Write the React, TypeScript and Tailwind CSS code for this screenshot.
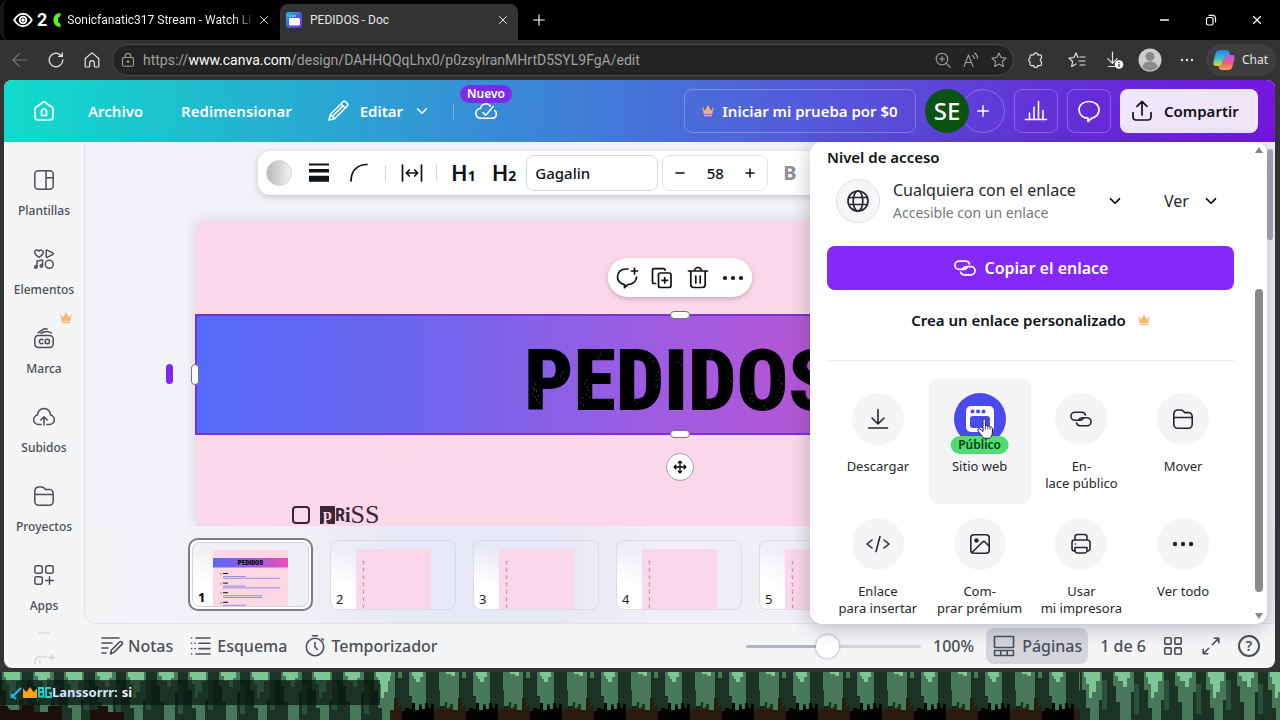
import React from "react";
import { X, Plus, Minus, ChevronDown } from "lucide-react";

type IconProps = { className?: string; children?: React.ReactNode; box?: number; w?: number };

function Icon({ className = "size-6", children, box = 24, w = 1.5 }: IconProps) {
  return (
    <svg
      viewBox={`0 0 ${box} ${box}`}
      className={`shrink-0 ${className}`}
      fill="none"
      stroke="currentColor"
      strokeWidth={w}
      strokeLinecap="round"
      strokeLinejoin="round"
      aria-hidden="true"
    >
      {children}
    </svg>
  );
}

function Crown() {
  return (
    <svg viewBox="0 0 12 12" className="size-3 shrink-0" aria-hidden="true">
      <path d="M.6 3.2 3 5.4 6 .8l3 4.6 2.4-2.2-1.1 6H1.7zM2 10h8v1.3H2z" fill="#f3b765" />
      <circle cx="6" cy="1" r=".8" fill="#f3b765" />
      <circle cx=".8" cy="3.2" r=".8" fill="#f3b765" />
      <circle cx="11.2" cy="3.2" r=".8" fill="#f3b765" />
    </svg>
  );
}

const LinkPaths = () => (
  <>
    <path d="M16.500 8c-.5-1.700-2-2.800-3.900-2.800H6a4 4 0 0 0 0 8.100H10.500c1.600 0 2.700-.7 3.600-1.700" />
    <path d="M7.500 16c.5 1.700 2 2.800 3.900 2.800H18a4 4 0 0 0 0-8.100H13.500c-1.600 0-2.700.7-3.600 1.700" />
  </>
);

const FolderPaths = () => (
  <path d="M2.800 10.500h18.400M2.800 17V6.800a3.800 3.800 0 0 1 3.800-3.800h3c1 0 1.900.4 2.600 1.100l1.300 1.500h4a3.800 3.800 0 0 1 3.700 3.800V17.500a3.800 3.800 0 0 1-3.800 3.700H6.600A3.800 3.800 0 0 1 2.800 17.500z" />
);

/* ---------- Browser chrome ---------- */

function TabBar() {
  return (
    <div className="flex h-10 shrink-0 items-end bg-black font-[Roboto,'Noto_Sans',sans-serif] text-white">
      <div className="flex h-10 w-[280px] items-center gap-1.5 rounded-lg border-l-4 border-[#161616] px-[9px]">
        <span className="flex items-center gap-1">
          <Icon className="size-5" w={2.2}>
            <path d="M1.500 12S5.500 4.500 12 4.500 22.500 12 22.500 12 18.500 19.500 12 19.500 1.500 12 1.500 12z" />
            <circle cx="12" cy="12" r="4" />
            <circle cx="12" cy="12" r="1" fill="currentColor" />
          </Icon>
          <span className="text-lg font-bold leading-5">2</span>
        </span>
        <svg viewBox="0 0 8 14" className="h-3.5 w-2 shrink-0" aria-hidden="true">
          <path d="M7.500 0C3 0 .5 3 .5 7s2.500 7 7 7V11L5 9V5l2.500-2z" fill="#53fc18" />
        </svg>
        <button className="min-w-0 flex-1 whitespace-nowrap bg-gradient-to-r from-white from-90% to-neutral-700 bg-clip-text text-left text-xs text-transparent">
          Sonicfanatic317 Stream - Watch Li
        </button>
        <button aria-label="Cerrar pestaña">
          <X className="size-3.5" strokeWidth={1.5} />
        </button>
      </div>
      <div className="flex h-9 w-[238px] items-center gap-2 rounded-t-lg bg-[#333333] pb-1 pl-[6px] pr-2">
        <svg viewBox="0 0 16 16" className="size-4 shrink-0" aria-hidden="true">
          <defs>
            <linearGradient id="fav" x1="0" y1="0" x2="1" y2="1">
              <stop offset="0" stopColor="#17c9cf" />
              <stop offset=".55" stopColor="#4b55e0" />
              <stop offset="1" stopColor="#8421e8" />
            </linearGradient>
          </defs>
          <rect width="16" height="16" rx="3" fill="url(#fav)" />
          <rect x="3" y="6" width="11" height="7.500" rx="1.500" fill="#fff" />
          <path d="M3.500 4h1.500M6 4h1.500M8.500 4H10" stroke="#fff" />
        </svg>
        <button className="flex-1 text-left text-xs text-neutral-200">PEDIDOS - Doc</button>
        <button aria-label="Cerrar pestaña activa">
          <X className="size-3.5" strokeWidth={1.5} />
        </button>
      </div>
      <div className="flex h-10 flex-1 items-center justify-between pl-3 pr-4">
        <button aria-label="Nueva pestaña">
          <Plus className="size-[18px]" strokeWidth={1.5} />
        </button>
        <div className="flex items-center gap-8">
          <button aria-label="Minimizar">
            <Icon className="size-3.5" box={14} w={1.3}>
              <path d="M2.500 7h8" />
            </Icon>
          </button>
          <button aria-label="Restaurar">
            <Icon className="size-3.5" box={14} w={1.2}>
              <rect x="2.500" y="4.500" width="6.500" height="7.500" rx="1.500" />
              <path d="M5 2.300h3.500a3 3 0 0 1 3 3V9" />
            </Icon>
          </button>
          <button aria-label="Cerrar">
            <X className="size-3.5" strokeWidth={2} />
          </button>
        </div>
      </div>
    </div>
  );
}

function AddressBar() {
  return (
    <div className="flex h-10 shrink-0 items-center bg-[#333333] pl-3 pr-1 text-neutral-200">
      <div className="flex w-[100px] items-center gap-5">
        <button aria-label="Atrás" className="text-neutral-500">
          <Icon className="size-4" box={16} w={1.1}>
            <path d="M15 8H1M7.500 1.500 1 8l6.500 6.500" />
          </Icon>
        </button>
        <button aria-label="Actualizar">
          <Icon className="size-4" box={16} w={1.3}>
            <path d="M14.800 8A6.800 6.800 0 1 1 12.500 2.900L14 4.300M14.300.8v3.600h-3.600" />
          </Icon>
        </button>
        <button aria-label="Inicio">
          <Icon className="size-4" box={16} w={1.2}>
            <path d="M8 .9 1.200 6.500V14a1 1 0 0 0 1 1h2.500a1 1 0 0 0 1-1v-3a2.300 2.300 0 0 1 4.600 0v3a1 1 0 0 0 1 1h2.500a1 1 0 0 0 1-1V6.500z" />
          </Icon>
        </button>
      </div>
      <div className="flex h-8 min-w-0 flex-1 items-center gap-3 rounded-full border border-[#484848] bg-[#242424] pl-2 pr-1.5 text-neutral-400">
        <Icon className="size-3.5" box={14} w={1.1}>
          <rect x="1.500" y="4.500" width="11" height="8.700" rx="1.500" />
          <path d="M4.200 4.500V3.300a2.800 2.800 0 0 1 5.600 0v1.200" />
          <circle cx="7" cy="8.800" r=".7" fill="currentColor" />
        </Icon>
        <div
          role="textbox"
          tabIndex={0}
          aria-label="Barra de direcciones"
          className="-ml-2 min-w-0 flex-1 truncate pl-1 font-[Roboto,'Noto_Sans',sans-serif] text-sm"
        >
          https://<span className="text-white">www.canva.com</span>
          /design/DAHHQQqLhx0/p0zsylranMHrtD5SYL9FgA/edit
        </div>
        <button aria-label="Acercar">
          <Icon className="size-4" box={16} w={1.1}>
            <circle cx="7" cy="7" r="5.800" />
            <path d="m11.300 11.300 4 4M4.500 7h5M7 4.500v5" />
          </Icon>
        </button>
        <button aria-label="Leer en voz alta">
          <Icon className="size-4" box={16} w={1.1}>
            <path d="M1 14.500 5.500 3 10 14.500M2.600 10.500h5.800M9.500 3.500c1 .6 1.700 1.700 1.700 3M11.500 1c1.800 1 3 3 3 5.300" />
          </Icon>
        </button>
        <button aria-label="Favorito">
          <Icon className="size-4" box={16} w={1.1}>
            <path d="m8 1 2.100 4.500 4.900.6-3.600 3.400.9 4.900L8 12l-4.300 2.400.9-4.900L1 6.100l4.900-.6z" />
          </Icon>
        </button>
      </div>
      <div className="flex items-center gap-5 pl-3.5 pr-3">
        <button aria-label="Extensiones">
          <Icon className="size-4" box={16} w={1.2}>
            <path d="M3.500 2.800h2.300a1.900 1.900 0 0 1 3.800 0H12a1.500 1.500 0 0 1 1.500 1.500v2a1.900 1.900 0 0 0 0 3.600v2.300a1.500 1.500 0 0 1-1.500 1.500H9.600a1.900 1.900 0 0 1-3.800 0H3.500A1.500 1.500 0 0 1 2 12.200V9.900a1.900 1.900 0 0 1 0-3.600v-2a1.500 1.500 0 0 1 1.500-1.500z" />
          </Icon>
        </button>
        <button aria-label="Lista de favoritos" className="pl-1">
          <Icon className="size-[18px]" box={18} w={1.2}>
            <path d="M10 6.500 8 2 5.900 6.500 1 7.100l3.600 3.400-.9 4.900L8 13M12 6h5M11 10h6M12 14h5" />
          </Icon>
        </button>
        <button aria-label="Descargas">
          <Icon className="size-[18px]" box={18} w={1.2}>
            <path d="M6.500 1v11M1.800 7.600 6.500 12.300l4.700-4.700M2.500 15.500h6" />
            <circle cx="13" cy="13.500" r="4.300" fill="#fff" stroke="none" />
            <path d="M13 13v2.500M13 11.300v.1" stroke="#222" />
          </Icon>
        </button>
        <button aria-label="Perfil" className="-mx-1.5">
          <svg viewBox="0 0 24 24" className="size-6" aria-hidden="true">
            <circle cx="12" cy="12" r="11.500" fill="#cfcdcb" />
            <circle cx="12" cy="8.500" r="4.500" fill="#8d8a88" />
            <path d="M4.500 19.500c0-8 15-8 15 0-4 4-11 4-15 0z" fill="#8d8a88" />
          </svg>
        </button>
        <button aria-label="Más opciones" className="pl-1">
          <Icon className="h-4 w-3.5" box={14}>
            <g fill="currentColor" stroke="none">
              <circle cx="2" cy="7" r="1.200" />
              <circle cx="7" cy="7" r="1.200" />
              <circle cx="12" cy="7" r="1.200" />
            </g>
          </Icon>
        </button>
      </div>
      <button className="flex h-8 items-center gap-1.5 rounded-full bg-[#3e3e3e] px-1.5 pr-2 text-xs">
        <svg viewBox="0 0 24 24" className="size-6" aria-hidden="true">
          <defs>
            <linearGradient id="cpa" x1="0" y1="0" x2="0" y2="1">
              <stop offset="0" stopColor="#2a7bf0" />
              <stop offset=".5" stopColor="#2cc5d6" />
              <stop offset="1" stopColor="#e9d435" />
            </linearGradient>
            <linearGradient id="cpb" x1="0" y1="0" x2="0" y2="1">
              <stop offset="0" stopColor="#b05cf5" />
              <stop offset=".5" stopColor="#f1568f" />
              <stop offset="1" stopColor="#f9a14a" />
            </linearGradient>
          </defs>
          <path d="M8 2h7c1.500 0 2 1 2.300 2l.7 3h-3c-1.500 0-2.200 1-2.600 2.300L10.500 15c-.5 2-1.500 3-3 3H4c-2 0-3-1.500-2.500-4l2-8.500C4.200 3 5.500 2 8 2z" fill="url(#cpa)" />
          <path d="M16 22H9.500c-1.500 0-2.300-1-2.600-2.500L6.500 18h1c1.500 0 2.500-1 3-3l1.900-5.700C12.800 8 13.500 7 15 7h5c2 0 3 1.500 2.500 4l-2 7.500C19.800 21 18.500 22 16 22z" fill="url(#cpb)" />
        </svg>
        Chat
      </button>
    </div>
  );
}

/* ---------- Editor header ---------- */

function EditorHeader() {
  return (
    <header className="flex h-[62px] shrink-0 items-center justify-between bg-[linear-gradient(95deg,#10dccb_0%,#2aa6d2_26%,#3f7ed8_45%,#5656da_65%,#642fd8_83%,#7415e0_100%)] pl-7 pr-[17px] text-[15px] font-semibold text-white">
      <div className="flex items-center">
        <a href="#inicio" aria-label="Inicio">
          <Icon w={1.7}>
            <path d="M12 2.500 4 8.300A2.500 2.500 0 0 0 3 10.300V18a3 3 0 0 0 3 3h12a3 3 0 0 0 3-3v-7.700a2.500 2.500 0 0 0-1-2z" />
            <path d="M9.500 16.500v-4a2.500 2.500 0 0 1 5 0v4z" />
          </Icon>
        </a>
        <button className="ml-8">Archivo</button>
        <button className="ml-[38px]">Redimensionar</button>
        <button className="ml-[34px] flex items-center gap-2.5">
          <Icon w={1.5}>
            <path d="m3 21 1.300-5.500L16.800 3a2.200 2.200 0 0 1 3.100 0l1.200 1.200a2.200 2.200 0 0 1 0 3.100L8.500 19.700zM15 4.900 19.200 9M4.300 15.500l4.200 4.200M6.800 17 17 6.900" />
          </Icon>
          Editar
          <ChevronDown className="size-[18px]" strokeWidth={2} />
        </button>
        <span className="ml-[22px] h-4 w-px bg-white/30" />
        <div className="relative ml-5 flex">
          <button aria-label="Guardado en la nube">
            <Icon w={1.6}>
              <path d="M16.500 7.200A5.500 5.500 0 0 0 6.500 9.500 4.900 4.900 0 0 0 7 19.300h11a4.300 4.300 0 0 0 2.800-7.600M9 13.500l2.700 2.700 7.500-8.500" />
            </Icon>
          </button>
          <span className="absolute -top-[14px] left-1/2 -translate-x-1/2 rounded-full bg-[#7d2ae8] px-[7px] text-xs leading-[18px]">
            Nuevo
          </span>
        </div>
      </div>
      <div className="flex items-center">
        <button className="flex h-11 w-[232px] items-center justify-center gap-2 rounded-lg border border-white/25">
          <Crown />
          Iniciar mi prueba por $0
        </button>
        <span className="z-10 ml-[9px] flex size-11 items-center justify-center rounded-full bg-[#0b5312] text-2xl font-medium">
          SE
        </span>
        <button
          aria-label="Añadir personas"
          className="-ml-2 flex size-11 items-center justify-center rounded-full border border-white/25"
        >
          <Plus className="size-[18px]" strokeWidth={2} />
        </button>
        <button
          aria-label="Estadísticas"
          className="ml-[9px] flex size-11 items-center justify-center rounded-lg border border-white/25"
        >
          <Icon w={1.6}>
            <path d="M1.500 20.500h21M5.500 20.500V14M10 20.500V8M14.500 20.500V2.500M19 20.500v-9" />
          </Icon>
        </button>
        <button
          aria-label="Comentarios"
          className="ml-[9px] flex size-11 items-center justify-center rounded-lg border border-white/25"
        >
          <Icon w={1.7}>
            <path d="M14.500 19.300 11 22.500V19.200C6 19 2 15.800 2 10.800 2 6 6 2.500 12 2.500s10 3.500 10 8.300c0 4.300-3 7.400-7.500 8.500z" />
          </Icon>
        </button>
        <button className="ml-[9px] flex h-11 w-[138px] items-center gap-2.5 rounded-lg bg-[#efe6fb] pl-2.5 text-[#0d1216]">
          <Icon w={1.7}>
            <path d="M3 13.500v4.800a2.700 2.700 0 0 0 2.700 2.700h12.600a2.700 2.700 0 0 0 2.700-2.700v-4.800M12 16V2.500M7 7.300l5-5 5 5" />
          </Icon>
          Compartir
        </button>
      </div>
    </header>
  );
}

/* ---------- Sidebar ---------- */

const sideItems: { label: string; crown?: boolean; icon: React.ReactNode }[] = [
  {
    label: "Plantillas",
    icon: (
      <>
        <rect x="2.800" y="2.800" width="18.400" height="18.400" rx="3.500" />
        <path d="M14 2.800v18.400M14 9.800h7.200" />
      </>
    ),
  },
  {
    label: "Elementos",
    icon: (
      <>
        <path d="M7 10.300C4.500 8.800 2.600 7.200 2.600 5.300A2.300 2.300 0 0 1 7 4.300a2.300 2.300 0 0 1 4.300 1c0 1.900-1.800 3.500-4.300 5zM14.200 3.600v6.200c0 .5.500.8 1 .5l5.800-3a.7.700 0 0 0 0-1.200l-5.800-3c-.5-.3-1 0-1 .5zM5 20v-6l5.500-1v6" />
        <circle cx="3.800" cy="20" r="1.200" />
        <circle cx="9.300" cy="19" r="1.200" />
        <circle cx="17.300" cy="17.300" r="4" />
      </>
    ),
  },
  {
    label: "Marca",
    crown: true,
    icon: (
      <>
        <rect x="2.800" y="9.500" width="18.400" height="12" rx="3.500" />
        <path d="M11 13.800a2.200 2.200 0 1 0 0 3.400M6 6.800 12 3c1-.6 2-.5 3 .2M9 7.300l3-1.300c3-1 5.500-.5 7.500 1" />
        <circle cx="15.300" cy="15.500" r="2.200" />
      </>
    ),
  },
  {
    label: "Subidos",
    icon: (
      <path d="M9 19.500H6.500a4.800 4.800 0 0 1-1-9.500 6.500 6.500 0 0 1 13 0 4.800 4.800 0 0 1-1 9.500H15M12 20v-7.500M8.800 15 12 11.800 15.200 15" />
    ),
  },
  { label: "Proyectos", icon: <FolderPaths /> },
  {
    label: "Apps",
    icon: (
      <>
        <rect x="2.800" y="2.800" width="7.500" height="7.500" rx="2" />
        <rect x="13.700" y="2.800" width="7.500" height="7.500" rx="2" />
        <rect x="2.800" y="13.700" width="7.500" height="7.500" rx="2" />
        <path d="M17.500 13.700v7.600M13.700 17.500h7.600" />
      </>
    ),
  },
];

function Sidebar() {
  return (
    <nav
      aria-label="Herramientas"
      className="flex w-20 shrink-0 flex-col overflow-hidden text-xs font-medium text-[#4c4f53]"
    >
      {sideItems.map((it) => (
        <button key={it.label} className="relative flex h-[79px] shrink-0 flex-col items-center gap-[11px] pt-[26px]">
          {it.crown && (
            <span className="absolute right-3 top-3">
              <Crown />
            </span>
          )}
          <Icon>{it.icon}</Icon>
          <span className="leading-4">{it.label}</span>
        </button>
      ))}
      <button aria-label="Más herramientas" className="flex flex-col items-center gap-5 pt-4 text-[#d3d5d8]">
        <span className="h-0.5 w-3 rounded bg-[#e0e2e5]" />
        <Icon>
          <path d="M3 10V7a4 4 0 0 1 4-4h8M19.500 1v5M17 3.500h5M8 7v2" />
        </Icon>
      </button>
    </nav>
  );
}

/* ---------- Canvas ---------- */

function TextToolbar() {
  return (
    <div className="absolute left-[173px] top-[9px] flex h-11 w-[1000px] items-center rounded-xl bg-white text-[#0d1216] shadow-[0_2px_6px_rgba(60,60,90,0.25)]">
      <button
        aria-label="Color"
        className="ml-2 size-[26px] rounded-full border border-neutral-300 bg-gradient-to-r from-[#b9b9b9] to-[#f2f2f2]"
      />
      <button aria-label="Grosor" className="ml-[15px]">
        <Icon>
          <path d="M2 3.500h20" strokeWidth="1.800" strokeLinecap="butt" />
          <path d="M2 9.800h20" strokeWidth="3.500" strokeLinecap="butt" />
          <path d="M2 17.800h20" strokeWidth="6" strokeLinecap="butt" />
        </Icon>
      </button>
      <button aria-label="Curva" className="ml-4">
        <Icon w={1.7}>
          <path d="M4 20C4 10 10 3.500 20 3.500" />
        </Icon>
      </button>
      <span className="ml-3.5 h-4 w-px bg-neutral-300" />
      <button aria-label="Espaciado" className="ml-3.5">
        <Icon w={1.7}>
          <path d="M2.500 4v16M21.500 4v16M6.500 12h11M9.300 9l-3 3 3 3M14.700 9l3 3-3 3" />
        </Icon>
      </button>
      <span className="ml-3 h-4 w-px bg-neutral-300" />
      <button className="ml-3.5 flex items-baseline text-[22px] font-semibold leading-none">
        H<span className="text-sm font-bold">1</span>
      </button>
      <button className="ml-4 flex items-baseline text-[22px] font-semibold leading-none">
        H<span className="text-sm font-bold">2</span>
      </button>
      <input
        aria-label="Fuente"
        defaultValue="Gagalin"
        className="ml-2.5 h-9 w-[132px] rounded-lg border border-[#d5d6da] px-2 text-[15px] font-medium outline-none"
      />
      <div className="ml-1 flex h-9 w-[106px] items-center justify-between rounded-lg border border-[#e2e3e6] px-2.5">
        <button aria-label="Reducir">
          <Minus className="size-3.5" strokeWidth={2.5} />
        </button>
        <input
          aria-label="Tamaño de fuente"
          defaultValue="58"
          className="w-8 text-center text-[15px] font-medium outline-none"
        />
        <button aria-label="Aumentar">
          <Plus className="size-3.5" strokeWidth={2.5} />
        </button>
      </div>
      <button className="ml-[15px] text-xl font-bold text-[#8e9094]">B</button>
    </div>
  );
}

const specks = [
  [8, 44], [12, 50], [9, 38], [36, 26], [62, 44], [60, 34], [56, 52], [74, 8], [84, 50],
  [110, 50], [132, 26], [130, 34], [126, 8], [154, 12], [160, 50], [182, 52],
  [204, 28], [208, 33], [186, 8], [226, 48], [252, 46], [256, 38], [254, 30], [240, 56],
];

function Design() {
  return (
    <div className="absolute left-1/2 top-[79px] h-[306px] w-[968px] -translate-x-1/2 rounded-t-md bg-[#fad8e8] shadow-[0_0_14px_rgba(70,80,110,0.18)]">
      <div className="absolute left-[412px] top-[37px] flex h-[39px] w-[144px] items-center justify-between rounded-full bg-white px-[7px] text-[#0d1216] shadow-[0_2px_5px_rgba(60,40,60,0.25)]">
        <button aria-label="Comentar">
          <Icon w={1.7}>
            <path d="M13 3H11C6 3 2.500 6.300 2.500 10.800c0 4.400 3 7 7 7.800v3l3.200-3c5-.3 8.800-3.200 8.800-7.600M19.500 2v6M16.500 5h6" />
          </Icon>
        </button>
        <button aria-label="Duplicar">
          <Icon w={1.7}>
            <rect x="8.500" y="7" width="12.500" height="14.500" rx="2" />
            <path d="M5.500 17.500H4.300A1.800 1.800 0 0 1 2.500 15.700V4.500c0-1 .8-1.800 1.800-1.800h9c1 0 1.800.8 1.800 1.500M14.700 11.500v5.500M12 14.300h5.500" />
          </Icon>
        </button>
        <button aria-label="Eliminar">
          <Icon w={1.7}>
            <path d="M2.500 5h19M8.500 5a3.500 3.500 0 0 1 7 0M4.800 5v13.500a3 3 0 0 0 3 3h8.400a3 3 0 0 0 3-3V5M9.800 10v7M14.200 10v7" />
          </Icon>
        </button>
        <button aria-label="Más">
          <Icon>
            <g fill="currentColor" stroke="none">
              <circle cx="4" cy="12" r="2.100" />
              <circle cx="12" cy="12" r="2.100" />
              <circle cx="20" cy="12" r="2.100" />
            </g>
          </Icon>
        </button>
      </div>
      <div className="absolute -left-px top-[93px] flex h-[121px] w-[970px] items-center justify-center border-2 border-[#7a30d8] bg-[linear-gradient(90deg,#566bfa_0%,#6a66ee_20%,#9a5de4_45%,#b356d6_62%,#ee4fb8_100%)] pt-3">
        <h1 className="relative font-['Roboto_Condensed',Roboto,sans-serif] text-[86px] font-black leading-none text-black">
          PEDIDOS
          <svg viewBox="0 0 312 62" className="absolute left-0 top-3 h-[62px] w-full" aria-hidden="true">
            {specks.map(([x, y], i) => (
              <path
                key={i}
                d={`M${x} ${y}h1M${x + 3} ${y + 3}h1M${x + 2} ${y - 4}h1`}
                stroke="#7a50c8"
                strokeWidth="1"
              />
            ))}
          </svg>
        </h1>
        <span className="absolute -left-[6px] top-[48px] h-[21px] w-2 rounded-full border border-neutral-500 bg-white" />
        <span className="absolute -left-[31px] top-[48px] h-5 w-[7px] rounded-full bg-[#8027f2]" />
        <span className="absolute -top-[5px] left-1/2 h-2 w-5 -translate-x-1/2 rounded-full border border-neutral-500 bg-white" />
        <span className="absolute -bottom-[5px] left-1/2 h-2 w-5 -translate-x-1/2 rounded-full border border-neutral-500 bg-white" />
      </div>
      <button
        aria-label="Mover elemento"
        className="absolute left-[470px] top-[232px] flex size-7 items-center justify-center rounded-full border border-neutral-400 bg-white text-black"
      >
        <Icon className="size-3.5" box={16} w={1.5}>
          <path d="M8 1.500v13M1.500 8h13M6 3.300 8 1.300l2 2M6 12.700l2 2 2-2M3.300 6l-2 2 2 2M12.700 6l2 2-2 2" />
        </Icon>
      </button>
      <label className="absolute left-[96px] top-[282px] flex items-center gap-2.5 text-[#3a2733]">
        <input type="checkbox" className="size-[18px] appearance-none rounded border-2 border-[#3a2733]" />
        <span className="flex items-center leading-6">
          <span className="bg-[#3a2733] px-[3px] font-['Liberation_Serif',serif] text-base font-bold leading-[18px] text-[#fad8e8]">
            p
          </span>
          <span className="font-['Roboto_Condensed',Roboto,sans-serif] text-lg font-bold leading-6">R</span>
          <span className="font-['Liberation_Serif',serif] text-xl font-bold leading-6">i</span>
          <span className="font-['Liberation_Serif',serif] text-[26px] leading-6">SS</span>
        </span>
      </label>
    </div>
  );
}

const blocks = [
  { name: "priss", a: 23, b: 57 },
  { name: "emilia", a: 23, b: 57 },
  { name: "abril", a: 39, b: 39 },
  { name: "cielo", a: 23, b: 57 },
];

function MiniFirst() {
  return (
    <svg viewBox="0 0 75 58" className="h-[58px] w-[75px]" role="img" aria-label="Miniatura">
      <defs>
        <linearGradient id="mini">
          <stop offset="0" stopColor="#566bfa" />
          <stop offset=".55" stopColor="#9c5ae0" />
          <stop offset="1" stopColor="#f04fb6" />
        </linearGradient>
      </defs>
      <rect width="75" height="58" fill="#fdd7e6" />
      <rect y="8" width="75" height="9.500" fill="url(#mini)" />
      <text
        x="37.500"
        y="15.200"
        fontSize="7"
        fontWeight="900"
        textAnchor="middle"
        fontFamily="Roboto Condensed, Roboto, sans-serif"
      >
        PEDIDOS
      </text>
      {blocks.map((b, i) => (
        <g key={b.name} transform={`translate(8 ${23 + i * 9.6})`}>
          <path d="M0 0v2" stroke="#333" strokeWidth=".5" />
          <path d="M2 .5h5" stroke="#111" strokeWidth="1" />
          <path d={`M2 3.500h${b.a}M2 5.300h${b.b}`} stroke="#6672d8" strokeWidth=".7" />
        </g>
      ))}
    </svg>
  );
}

function MiniEmpty() {
  return (
    <svg viewBox="0 0 75 61" className="h-[61px] w-[75px]" aria-hidden="true">
      <rect width="75" height="61" fill="#fad8e8" />
      {Array.from({ length: 7 }, (_, i) => (
        <path
          key={i}
          d={`M6.500 ${12.5 + i * 7.3}h2M7.500 ${13.5 + i * 7.3}v2`}
          stroke="#95808b"
          strokeWidth=".8"
        />
      ))}
    </svg>
  );
}

function PageStrip() {
  return (
    <div className="relative flex h-[97px] shrink-0 gap-4 overflow-hidden bg-[linear-gradient(90deg,#f3f4f6_0%,#f0f0f6_18%,#e8e9f6_26%,#e8e9f6_40%,#f1eef4_48%,#f1eef4_100%)] pl-[103px] pt-3">
      <button
        aria-current="page"
        aria-label="Página 1"
        className="mr-px flex h-[73px] w-[125px] shrink-0 rounded-[10px] border-2 border-[#7b7c82] bg-white p-0.5"
      >
        <span className="relative flex h-full w-full justify-center overflow-hidden rounded-lg border border-neutral-300 bg-[#f0eff3] bg-[radial-gradient(circle_at_0%_100%,#fff_20%,transparent_45%)] pt-[7px]">
          <MiniFirst />
          <span className="absolute bottom-0 left-[5px] text-[13px] font-bold leading-[18px] text-black">1</span>
        </span>
      </button>
      {[2, 3, 4, 5].map((n) => (
        <button
          key={n}
          aria-label={`Página ${n}`}
          className="relative mr-px mt-0.5 flex h-[70px] w-[126px] shrink-0 justify-center overflow-hidden rounded-lg border border-[#dcdbe3] bg-[radial-gradient(circle_at_0%_100%,#fff_20%,transparent_45%)] pt-2"
        >
          <MiniEmpty />
          <span className="absolute bottom-0 left-[5px] text-[13px] leading-5 text-[#222]">{n}</span>
        </button>
      ))}
    </div>
  );
}

function BottomBar() {
  return (
    <footer className="flex h-11 shrink-0 items-center justify-between pl-4 pr-[15px] text-base font-medium text-[#4c4f53]">
      <div className="flex items-center gap-4">
        <button className="flex items-center gap-1">
          <Icon w={1.6}>
            <path d="M2 4h17M2 9h10M2 14h6M2 19h4M10.500 20l1-4 8-8a1.700 1.700 0 0 1 2.400 2.400l-8 8z" />
          </Icon>
          Notas
        </button>
        <button className="flex items-center gap-1">
          <Icon w={1.6}>
            <path d="M7 4h14M10 9.300h11M10 14.600h11M7 20h14M2.500 4h.1M2.500 9.300h.1M6 9.300h.1M2.500 14.600h.1M6 14.600h.1M2.500 20h.1" />
          </Icon>
          Esquema
        </button>
        <button className="flex items-center gap-1">
          <Icon w={1.6}>
            <circle cx="12" cy="13" r="8.700" />
            <path d="M9.500 1.800h5M12 8.500V13l2.500 2.500M19 4.500l1.500 1.500" />
          </Icon>
          Temporizador
        </button>
      </div>
      <div className="flex items-center gap-3">
        <input
          type="range"
          aria-label="Zoom"
          defaultValue={46}
          className="h-[3px] w-[175px] appearance-none rounded-full bg-[linear-gradient(90deg,#b4b5c4_47%,#d3d4dd_47%)] [&::-webkit-slider-thumb]:size-[23px] [&::-webkit-slider-thumb]:appearance-none [&::-webkit-slider-thumb]:rounded-full [&::-webkit-slider-thumb]:bg-white [&::-webkit-slider-thumb]:shadow-[0_0_3px_rgba(50,50,80,0.5)]"
        />
        <button>100%</button>
        <button className="flex h-9 items-center gap-1.5 rounded-lg bg-[#d4d5df] px-1.5">
          <Icon w={1.6}>
            <path d="M2.500 2.500h19v11h-19zM2.500 16.500h19v5h-19zM8.800 16.500v5M15.200 16.500v5" />
          </Icon>
          Páginas
        </button>
        <button>1 de 6</button>
        <button aria-label="Cuadrícula" className="pl-1">
          <Icon className="size-[22px]" w={1.8}>
            <rect x="3" y="3" width="7" height="7" rx="1" />
            <rect x="14" y="3" width="7" height="7" rx="1" />
            <rect x="3" y="14" width="7" height="7" rx="1" />
            <rect x="14" y="14" width="7" height="7" rx="1" />
          </Icon>
        </button>
        <button aria-label="Pantalla completa" className="px-1">
          <Icon className="size-[22px]" w={1.7}>
            <path d="M13.500 10.500 20.500 3.500M15.500 3.500h5v5M9.500 14.500l-6 6M3.500 15.500v5h5" />
          </Icon>
        </button>
        <button
          aria-label="Ayuda"
          className="flex size-[22px] items-center justify-center rounded-full border-2 border-[#4c4f53] text-sm font-semibold leading-none"
        >
          ?
        </button>
      </div>
    </footer>
  );
}

/* ---------- Share panel ---------- */

function Action({ label, children }: { label: React.ReactNode; children: React.ReactNode }) {
  return (
    <button className="flex h-[125px] flex-col items-center gap-[13px] whitespace-nowrap pt-3.5">
      <span className="flex size-[52px] shrink-0 items-center justify-center rounded-full bg-[#f5f5f7]">
        <Icon w={1.6}>{children}</Icon>
      </span>
      <span className="text-center leading-[17px]">{label}</span>
    </button>
  );
}

function SharePanel() {
  return (
    <section
      aria-label="Compartir diseño"
      className="absolute right-2 top-0 flex h-[482px] w-[457px] overflow-hidden rounded-xl bg-white text-[#24272c] shadow-[0_3px_20px_rgba(40,40,80,0.3)]"
    >
      <div className="flex min-w-0 flex-1 flex-col pl-[17px] pr-[21px]">
        <h2 className="shrink-0 pt-1 text-[15px] font-semibold leading-[22px] text-[#0d1216]">Nivel de acceso</h2>
        <div className="mt-2.5 flex shrink-0 items-center pl-[9px]">
          <button className="flex flex-1 items-center text-left">
            <span className="flex size-11 items-center justify-center rounded-full border border-[#dcdde2] bg-[#f6f6f8]">
              <Icon w={1.7}>
                <circle cx="12" cy="12" r="10" />
                <ellipse cx="12" cy="12" rx="4.800" ry="10" />
                <path d="M3.500 8.500h17M3.500 15.500h17" />
              </Icon>
            </span>
            <span className="ml-[13px] flex flex-1 flex-col">
              <span className="text-base leading-6">Cualquiera con el enlace</span>
              <span className="text-sm leading-[22px] text-[#74777c]">Accesible con un enlace</span>
            </span>
            <ChevronDown className="size-[18px] text-black" strokeWidth={2.3} />
          </button>
          <div className="ml-10 flex items-center gap-1 pr-3.5">
            <select
              aria-label="Permiso"
              className="w-[34px] appearance-none text-base outline-none"
              defaultValue="Ver"
            >
              <option>Ver</option>
            </select>
            <ChevronDown className="size-[18px] text-black" strokeWidth={2.3} />
          </div>
        </div>
        <button className="mt-[22px] flex h-11 shrink-0 items-center justify-center gap-2 rounded-lg bg-[#8528fa] text-base font-semibold text-white">
          <Icon w={1.7}>
            <LinkPaths />
          </Icon>
          Copiar el enlace
        </button>
        <button className="mt-[18px] flex shrink-0 items-center justify-center gap-3 text-[15px] font-semibold leading-6 text-[#0d1216]">
          Crea un enlace personalizado
          <Crown />
        </button>
        <hr className="mt-7 shrink-0 border-[#ececef]" />
        <div className="mt-[18px] grid shrink-0 grid-cols-4 text-[13px]">
          <Action label="Descargar">
            <path d="M12 2.500v14M6 11l6 6 6-6M2.500 21h19" />
          </Action>
          <button className="relative flex h-[125px] flex-col items-center gap-[13px] rounded-lg bg-[#f4f4f6] pt-3.5">
            <span className="flex size-[52px] shrink-0 items-center justify-center rounded-full bg-[#4b4aec]">
              <svg viewBox="0 0 30 28" className="h-7 w-[30px]" aria-hidden="true">
                <rect x="1" y="1" width="28" height="26" rx="5" fill="#fff" />
                <g fill="#4b4aec">
                  <circle cx="7.500" cy="6.500" r="2" />
                  <circle cx="13" cy="6.500" r="2" />
                  <circle cx="18.500" cy="6.500" r="2" />
                  <rect x="5" y="11" width="20" height="12" rx="3" />
                </g>
              </svg>
            </span>
            <span className="leading-[17px]">Sitio web</span>
            <span className="absolute left-1/2 top-[57px] -translate-x-1/2 rounded-full bg-[#51dc70] px-2 text-xs font-semibold leading-[18px] text-[#10381b]">
              Público
            </span>
            <svg viewBox="0 0 18 21" className="absolute left-12 top-[39px] h-[21px] w-[18px]" aria-hidden="true">
              <path
                d="M6 2.200c0-1.600 2.400-1.600 2.400 0V8c.6-1 2.300-.7 2.400.6.6-.8 2.200-.5 2.300.7.900-.7 2.300-.1 2.300 1.200V14c0 3.700-1.700 5.500-3 6.300H6.800C5.500 18.500 2.500 14.800 1 12.700c-1-1.600.6-2.700 2-1.600l3 2.400z"
                fill="#fff"
                stroke="#222"
                strokeWidth="1"
              />
              <path d="M8.400 8v3.500M10.800 8.600v3M13.100 9.300v2.500" stroke="#333" strokeWidth=".8" />
            </svg>
          </button>
          <Action label={<>En-<br />lace público</>}>
            <LinkPaths />
          </Action>
          <Action label="Mover">
            <FolderPaths />
          </Action>
          <Action label={<>Enlace<br />para insertar</>}>
            <path d="M6 8l-5 4 5 4M18 8l5 4-5 4M14 4.500 10 19.500" />
          </Action>
          <Action label={<>Com-<br />prar prémium</>}>
            <rect x="2.800" y="2.800" width="18.400" height="18.400" rx="3" />
            <path d="M4 20.500 14.500 10c.8-.8 1.700-.8 2.500 0l4 4" />
            <circle cx="8.500" cy="8.500" r="1.500" fill="currentColor" />
          </Action>
          <Action label={<>Usar<br />mi impresora</>}>
            <path d="M6 8V5a2.500 2.500 0 0 1 2.500-2.500h7A2.500 2.500 0 0 1 18 5v3M6 19H5.500A2.500 2.500 0 0 1 3 16.500v-6A2.500 2.500 0 0 1 5.500 8h13a2.500 2.500 0 0 1 2.500 2.500v6a2.500 2.500 0 0 1-2.500 2.500H18M6 15.500h12v3a2.500 2.500 0 0 1-2.500 2.500h-7A2.500 2.500 0 0 1 6 18.500zM6.500 12h.1" />
          </Action>
          <Action label="Ver todo">
            <g fill="currentColor" stroke="none">
              <circle cx="4" cy="12" r="2.200" />
              <circle cx="12" cy="12" r="2.200" />
              <circle cx="20" cy="12" r="2.200" />
            </g>
          </Action>
        </div>
      </div>
      <div className="flex w-3 flex-col items-center pb-[5px] pr-1 pt-[5px]" aria-hidden="true">
        <svg viewBox="0 0 8 6" className="h-1.5 w-2">
          <path d="M4 0l4 6H0z" fill="#888" />
        </svg>
        <div className="mt-[136px] w-2 flex-1 rounded-full bg-[#888]" />
        <svg viewBox="0 0 8 6" className="mt-[21px] h-1.5 w-2">
          <path d="M4 6l4-6H0z" fill="#888" />
        </svg>
      </div>
    </section>
  );
}

/* ---------- Stream overlay ---------- */

function StreamStrip() {
  return (
    <div className="relative h-12 shrink-0 overflow-hidden bg-[#1a3325]">
      <svg className="absolute inset-0 size-full" aria-hidden="true" shapeRendering="crispEdges">
        <defs>
          <pattern id="forest" width="64" height="48" patternUnits="userSpaceOnUse" patternTransform="translate(25 0)">
            <rect width="64" height="48" fill="#1a3325" />
            <path d="M0 0H17V37H13V32H10V38H6V34H3V24H0z" fill="#47785a" />
            <path d="M30 0H50V38H44V32H41V36H38V30H36V34H31z" fill="#47785a" />
            <path d="M53 0H57V6H53z" fill="#47785a" />
            <path d="M3 0H14V5H11V10H7V7H5V4H3z" fill="#7ec795" />
            <path d="M37 0H46V4H42V2H37z" fill="#7ec795" />
            <path d="M0 48V37H3V31H6V38H10V34H13V37H16V31H19V36H22V32H25V48zM57 48V39H60V36H64V48z" fill="#020302" />
            <path d="M25 38H31V34H36V38H40V35H41V37H44V38H49V26H53V34H57V48H25z" fill="#2b1a10" />
          </pattern>
          <pattern id="grove" width="62" height="48" patternUnits="userSpaceOnUse">
            <rect width="62" height="48" fill="#1a3325" />
            <path d="M2 0H22V28H19V48H10V36H6V18H2zM33 0H54V20H51V48H40V30H36V14H33z" fill="#47785a" />
            <path d="M22 8h5v30h-5zM54 12h5v30h-5z" fill="#2a4f3a" />
            <path d="M4 0H20V9H16V20H12V26H9V12H6V5H4zM35 0H50V6H47V15H43V9H38V4H35z" fill="#7ec795" />
          </pattern>
        </defs>
        <rect width="100%" height="100%" fill="url(#forest)" />
        <rect width="390" height="100%" fill="url(#grove)" />
        <path d="M0 48V34H8V38H22V33H34V40H48V34H62V48zM90 48V38H98V34H108V40H124V48z" fill="#1c0f08" />
      </svg>
      <svg className="absolute right-0 top-0 h-12 w-[200px]" aria-hidden="true" shapeRendering="crispEdges">
        <rect width="100%" height="100%" fill="url(#grove)" />
      </svg>
      <div className="relative mt-2 flex h-[25px] w-[380px] items-center bg-[#08160f]/70 pl-2.5 text-[13px] font-bold text-white">
        <svg viewBox="0 0 42 14" className="h-3.5 w-[42px]" aria-hidden="true">
          <path d="M1 12 4 9M1 8l5 5M4 9l7-7" stroke="#27b4ee" strokeWidth="2.200" />
          <path d="M13 2.500 16.500 6 20 1l3.500 5L27 2.500V12H13z" fill="#f6a315" />
          <path d="M29 2h4v4h-4zm0 4h4.500v4.500H29zM41 2h-5v9h5V7h-2" fill="none" stroke="#21d6d0" strokeWidth="1.800" />
        </svg>
        <span className="text-[#d6e4ff]">Lanssorrr:</span>
        <span className="ml-1">si</span>
      </div>
    </div>
  );
}

export default function App() {
  return (
    <div className="flex h-screen min-h-[720px] flex-col overflow-hidden bg-[#333333] font-['Noto_Sans',sans-serif]">
      <TabBar />
      <AddressBar />
      <div className="mb-1 ml-1 mr-[5px] flex min-h-0 flex-1 flex-col overflow-hidden rounded-lg bg-[#f4f5f7]">
        <EditorHeader />
        <div className="flex min-h-0 flex-1">
          <Sidebar />
          <main className="relative flex min-w-0 flex-1 flex-col">
            <div className="flex min-h-0 flex-1 flex-col overflow-hidden rounded-bl-xl border-b border-l border-[#e2e3e7] bg-[#f2f3f6]">
              <div className="relative min-h-0 flex-1 overflow-hidden">
                <Design />
                <TextToolbar />
                <div className="absolute right-0.5 top-[7px] h-[91px] w-1.5 rounded-full bg-[#a9aab8]" />
              </div>
              <PageStrip />
            </div>
            <BottomBar />
            <SharePanel />
          </main>
        </div>
      </div>
      <StreamStrip />
    </div>
  );
}
